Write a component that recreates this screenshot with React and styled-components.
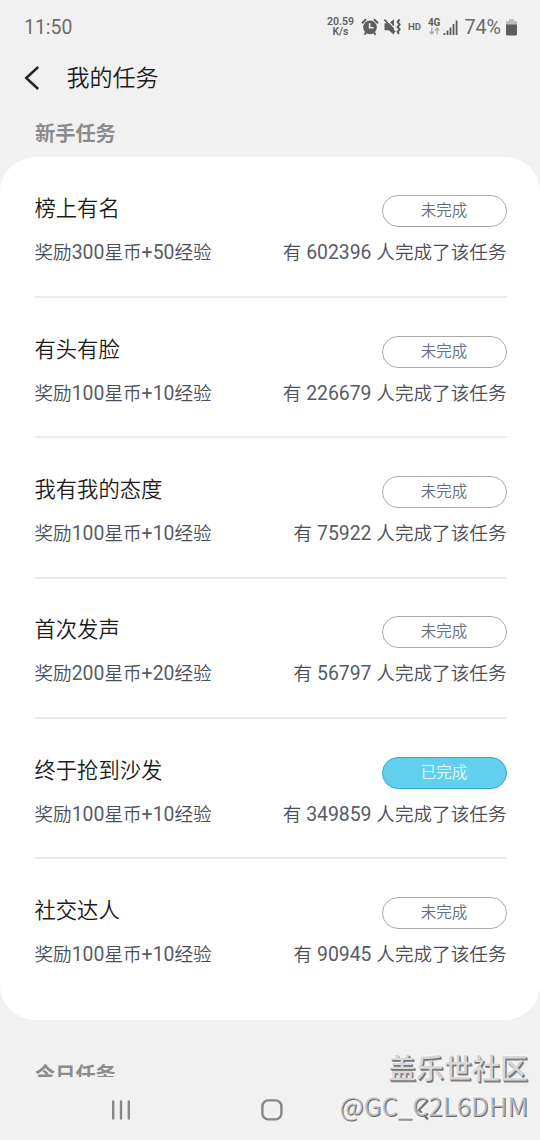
import styled, { createGlobalStyle } from 'styled-components'

const tasks = [
  { name: '榜上有名', coins: 300, exp: 50, count: 602396 },
  { name: '有头有脸', coins: 100, exp: 10, count: 226679 },
  { name: '我有我的态度', coins: 100, exp: 10, count: 75922 },
  { name: '首次发声', coins: 200, exp: 20, count: 56797 },
  { name: '终于抢到沙发', coins: 100, exp: 10, count: 349859, done: true },
  { name: '社交达人', coins: 100, exp: 10, count: 90945 },
]

export default function App() {
  return (
    <Main>
      <GlobalStyle />
      <StatusBar>
        <Time>11:50</Time>
        <Speed>
          <span>20.59</span>
          <span>K/s</span>
        </Speed>
        <AlarmIcon />
        <MuteIcon />
        <Hd>HD</Hd>
        <SignalIcon />
        <Percent>74%</Percent>
        <BatteryIcon />
      </StatusBar>

      <Header>
        <svg width="16" height="24" viewBox="0 0 16 24" fill="none" stroke="#222" strokeWidth="2.4">
          <path d="M14.2 1L2.2 12l12 11" />
        </svg>
        <H1>我的任务</H1>
      </Header>

      <H2>新手任务</H2>
      <Card>
        {tasks.map((task) => (
          <Task key={task.name}>
            <TopLine>
              <H3>{task.name}</H3>
              <Badge $done={task.done}>{task.done ? '已完成' : '未完成'}</Badge>
            </TopLine>
            <BottomLine>
              <span>奖励<Num>{task.coins}</Num>星币<Num>+{task.exp}</Num>经验</span>
              <span>有<Num> {task.count} </Num>人完成了该任务</span>
            </BottomLine>
          </Task>
        ))}
      </Card>
      <NextSection>
        <H2>今日任务</H2>
      </NextSection>

      <NavBar>
        <svg width="20" height="20" viewBox="0 0 20 20" stroke="#888" strokeWidth="2.4" strokeLinecap="round">
          <path d="M2.2 1.4v17.2M10 1.4v17.2M17.8 1.4v17.2" />
        </svg>
        <svg width="22" height="22" viewBox="0 0 22 22" fill="none" stroke="#888" strokeWidth="2.4">
          <rect x="1.4" y="1.4" width="19" height="19" rx="5.8" />
        </svg>
        <svg width="16" height="22" viewBox="0 0 16 22" fill="none" stroke="#777" strokeWidth="2.4">
          <path d="M15 1.6L6 11l9 9.4" />
        </svg>
      </NavBar>

      <Watermark>
        <Brand>盖乐世社区</Brand>
        <User>@GC_C2L6DHM</User>
      </Watermark>
    </Main>
  )
}

const AlarmIcon = () => (
  <Alarm width="18" height="18" viewBox="0 0 18 18">
    <circle cx="9" cy="9.4" r="6.8" fill="#5e5e5e" />
    <path d="M1 5.2L5 1.2M17 5.2L13 1.2M3.4 16.6l2-2.4M14.6 16.6l-2-2.4" stroke="#5e5e5e" strokeWidth="2" />
    <path d="M8.6 5.2v4.6h4" fill="none" stroke="#f1f1f1" strokeWidth="1.6" />
  </Alarm>
)

const MuteIcon = () => (
  <Mute width="17" height="18" viewBox="0 0 17 18">
    <path d="M0.5 5.2h4.2L10 1.2v15.6l-5.3-4.6H0.5z" fill="#5e5e5e" />
    <path d="M2.6 1.4L12 11.6" stroke="#f1f1f1" strokeWidth="1.2" />
    <path d="M0.6 1.6L11 14.2" stroke="#5e5e5e" strokeWidth="1.7" />
    <path d="M15.6 1.5l-2 2.4 2 2.5-2 2.5 2 2.5-2 2.5 1.4 2" fill="none" stroke="#5e5e5e" strokeWidth="2" />
  </Mute>
)

const SignalIcon = () => (
  <Signal>
    <Network>
      <b>4G</b>
      <svg width="11" height="8" viewBox="0 0 11 8" fill="none" stroke="#aaa" strokeWidth="1.4">
        <path d="M2.8 0.4v6.4M0.6 4.6l2.2 2.3L5 4.6M8.2 7.6V1.2M6 3.4l2.2-2.3 2.2 2.3" />
      </svg>
    </Network>
    <svg width="15" height="15" viewBox="0 0 15 15" fill="#5e5e5e">
      <path d="M0.5 13h1.8v2H0.5zM3.6 10.6h1.8V15H3.6zM6.6 7.4h1.8V15H6.6zM9.6 4h1.8v11H9.6zM12.7 0.5h1.8V15h-1.8z" />
    </svg>
  </Signal>
)

const BatteryIcon = () => (
  <svg width="11" height="17" viewBox="0 0 11 17">
    <path d="M3 0h5v2h3v4H0V2h3z" fill="#bdbdbd" />
    <path d="M0 5.5h11V15a1.5 1.5 0 0 1-1.5 1.5h-8A1.5 1.5 0 0 1 0 15z" fill="#5e5e5e" />
  </svg>
)

const GlobalStyle = createGlobalStyle`
  * {
    box-sizing: border-box;
  }
  body {
    margin: 0;
    background: #f1f1f1;
    font-family: Roboto, 'Noto Sans CJK SC', sans-serif;
  }
  svg {
    display: block;
    flex-shrink: 0;
  }
`

const Main = styled.main`
  position: relative;
  width: 540px;
  height: 1140px;
  overflow: hidden;
  background: #f1f1f1;
`

const StatusBar = styled.div`
  display: flex;
  align-items: center;
  height: 54px;
  padding: 0 23px 0 24px;
  color: #5e5e5e;
`

const Time = styled.span`
  font-size: 19.4px;
  color: #6b6b6b;
  margin-right: auto;
`

const Speed = styled.div`
  display: flex;
  flex-direction: column;
  align-items: center;
  font-size: 10.5px;
  line-height: 10px;
  font-weight: 600;
  margin-right: 7px;
`

const Alarm = styled.svg`
  margin-right: 5px;
`

const Mute = styled.svg`
  margin-right: 7px;
`

const Hd = styled.span`
  font-size: 9.5px;
  font-weight: 600;
  margin: 0 7px 2px 0;
`

const Signal = styled.div`
  display: flex;
  align-items: flex-end;
  gap: 3px;
  margin: 0 6px 1px 0;
`

const Network = styled.div`
  display: flex;
  flex-direction: column;
  align-items: center;
  font-size: 10px;
  line-height: 9px;
`

const Percent = styled.span`
  font-size: 19.7px;
  color: #6b6b6b;
  margin-right: 5px;
`

const Header = styled.header`
  display: flex;
  align-items: center;
  height: 48px;
  padding-left: 24px;
  gap: 26.5px;
`

const H1 = styled.h1`
  margin: 0;
  padding-top: 2px;
  font-size: 23px;
  font-weight: 350;
  line-height: 34px;
  color: #1c1c1c;
`

const H2 = styled.h2`
  margin: 0;
  padding: 16px 0 0 35px;
  height: 55px;
  font-size: 20.2px;
  font-weight: 700;
  line-height: 32px;
  color: #8b8b8b;
`

const Card = styled.section`
  height: 863px;
  border-radius: 35px;
  background: #fff;
  padding: 0.8px 33.5px 0 34.5px;
`

const Task = styled.div`
  height: 140.33px;
  padding-top: 37.4px;
  border-bottom: 2px solid #ebebeb;
  &:last-child {
    border-bottom: none;
  }
`

const TopLine = styled.div`
  display: flex;
  justify-content: space-between;
  height: 42px;
`

const H3 = styled.h3`
  margin: 0;
  font-size: 21.3px;
  font-weight: 350;
  line-height: 27px;
  color: #1c1c1c;
`

const Badge = styled.span`
  width: 125px;
  height: 32px;
  border: 1px solid ${(props) => (props.$done ? '#35a9cb' : '#aaa')};
  border-radius: 16px;
  background: ${(props) => (props.$done ? '#62cfee' : '#fff')};
  color: ${(props) => (props.$done ? '#e6fbff' : '#64707c')};
  font-size: 15.5px;
  font-weight: 350;
  line-height: 31px;
  text-align: center;
`

const BottomLine = styled.div`
  display: flex;
  justify-content: space-between;
  font-size: 18.6px;
  font-weight: 350;
  line-height: 32px;
  color: #4b4f5a;
  white-space: nowrap;
`

const Num = styled.span`
  font-size: 19.4px;
  font-weight: 400;
  color: #575b65;
`

const NextSection = styled.div`
  height: 57px;
  padding-top: 23px;
  overflow: hidden;
`

const NavBar = styled.nav`
  display: flex;
  align-items: center;
  justify-content: space-between;
  height: 65px;
  padding: 0 111px 0 111px;
`

const Watermark = styled.div`
  position: absolute;
  right: 12px;
  bottom: 19px;
  display: flex;
  flex-direction: column;
  align-items: flex-end;
  white-space: nowrap;
`

const Brand = styled.span`
  font-size: 28px;
  font-weight: 500;
  line-height: 36px;
  color: #d8d8d8;
  text-shadow: 1px 1px 0 #777, 1.5px 1.5px 0 #888, -1px -1px 0 #f8f8f8;
`

const User = styled.span`
  font-family: 'Noto Sans CJK SC', sans-serif;
  font-size: 25.7px;
  line-height: 33px;
  color: rgba(200, 200, 200, 0.8);
  text-shadow: 1px 1px 0 #6c6c6c, -1px -1px 0 #f8f8f8;
`
